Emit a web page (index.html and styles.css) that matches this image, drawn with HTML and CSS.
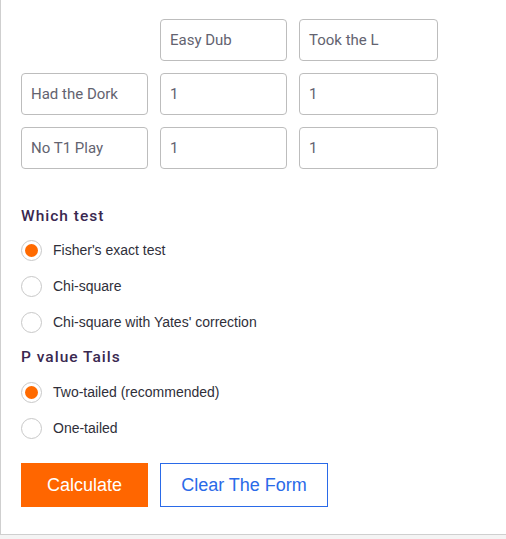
FILE: index.html
```html
<!DOCTYPE html>
<html>
<head>
<meta charset="utf-8">
<link rel="stylesheet" href="styles.css">
</head>
<body>
<div class="panel">
  <div class="grid">
    <div class="spacer"></div>
    <div class="field">Easy Dub</div>
    <div class="field">Took the L</div>
    <div class="field">Had the Dork</div>
    <div class="field">1</div>
    <div class="field">1</div>
    <div class="field">No T1 Play</div>
    <div class="field">1</div>
    <div class="field">1</div>
  </div>

  <h3 class="heading first">Which test</h3>
  <div class="radio-row"><span class="radio checked"></span><span class="label">Fisher's exact test</span></div>
  <div class="radio-row"><span class="radio"></span><span class="label">Chi-square</span></div>
  <div class="radio-row"><span class="radio"></span><span class="label">Chi-square with Yates' correction</span></div>

  <h3 class="heading second">P value Tails</h3>
  <div class="radio-row"><span class="radio checked"></span><span class="label">Two-tailed (recommended)</span></div>
  <div class="radio-row"><span class="radio"></span><span class="label">One-tailed</span></div>

  <div class="buttons">
    <button class="btn btn-primary">Calculate</button>
    <button class="btn btn-outline">Clear The Form</button>
  </div>
</div>
</body>
</html>
```
FILE: styles.css
```css
html, body {
  margin: 0;
  padding: 0;
  background: #f4f4f4;
}
.panel {
  background: #fff;
  border-left: 1px solid #cfcfcf;
  border-bottom: 1px solid #cfcfcf;
  height: 535px;
  box-sizing: border-box;
  padding: 19px 0 0 20px;
}
.grid {
  display: grid;
  grid-template-columns: 127px 127px 139px;
  grid-auto-rows: 42px;
  column-gap: 12px;
  row-gap: 12px;
}
.field {
  box-sizing: border-box;
  border: 1px solid #bdbdbd;
  border-radius: 4px;
  padding: 0 0 0 9px;
  display: flex;
  align-items: center;
  font-family: Roboto, "Liberation Sans", sans-serif;
  font-size: 15px;
  color: #636370;
}
.heading {
  margin: 0;
  height: 20px;
  line-height: 20px;
  font-family: Roboto, "Liberation Sans", sans-serif;
  font-weight: 500;
  font-size: 15.5px;
  letter-spacing: 1px;
  color: #3a2850;
}
.heading.first {
  margin-top: 37px;
  margin-bottom: 6px;
}
.heading.second {
  margin-top: 7px;
  margin-bottom: 7px;
}
.radio-row {
  height: 36px;
  display: flex;
  align-items: center;
}
.radio {
  box-sizing: border-box;
  width: 21px;
  height: 21px;
  border: 1px solid #c8c8c8;
  border-radius: 50%;
  display: flex;
  align-items: center;
  justify-content: center;
}
.radio.checked::after {
  content: "";
  width: 13px;
  height: 13px;
  border-radius: 50%;
  background: #ff6a00;
}
.label {
  margin-left: 11px;
  font-family: "Liberation Sans", Arial, sans-serif;
  font-size: 14px;
  color: #2f2f3a;
}
.buttons {
  display: flex;
  gap: 12px;
  margin-top: 17px;
}
.btn {
  box-sizing: border-box;
  height: 44px;
  font-family: "Liberation Sans", Arial, sans-serif;
  font-size: 18px;
  border-radius: 0;
  cursor: pointer;
  padding: 0;
}
.btn-primary {
  width: 127px;
  background: #ff6600;
  color: #fff;
  border: none;
}
.btn-outline {
  width: 168px;
  background: #fff;
  color: #2a6ae8;
  border: 1px solid #2a6ae8;
}
```
